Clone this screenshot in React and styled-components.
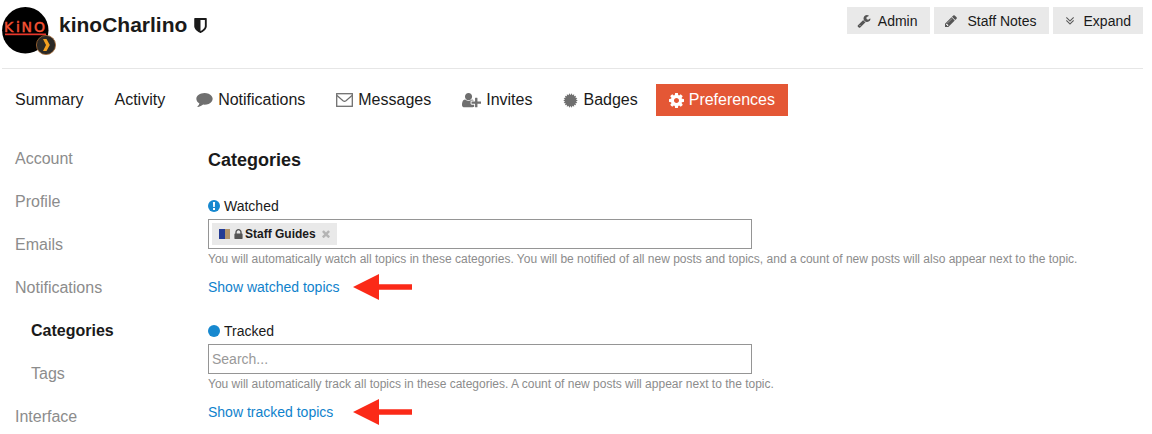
import React from "react";
import styled, { createGlobalStyle } from "styled-components";

const GlobalStyle = createGlobalStyle`
  *, *::before, *::after { box-sizing: border-box; }
  body {
    margin: 0;
    background: #fff;
    color: #1a1a1a;
    font-family: "Liberation Sans", Arial, Helvetica, sans-serif;
    font-size: 14px;
  }
  a { text-decoration: none; }
`;

const Page = styled.div`
  padding: 0 9px 0 2px;
`;

const Header = styled.header`
  display: flex;
  justify-content: space-between;
  align-items: flex-start;
  height: 69px;
  padding-top: 7px;
  border-bottom: 1px solid #e6e6e6;
`;

const Identity = styled.div`
  display: flex;
  gap: 2px;
`;

const Name = styled.h1`
  display: flex;
  align-items: center;
  gap: 7px;
  margin: 0;
  height: 36px;
  font-size: 21px;
  line-height: 36px;
`;

const Actions = styled.div`
  display: flex;
  gap: 4px;
`;

const ActionButton = styled.button`
  display: flex;
  align-items: center;
  gap: ${(p) => (p.$roomy ? 10 : 7)}px;
  height: 27px;
  padding: 0 12px 0 10px;
  border: 0;
  background: #e9e9e9;
  color: #1a1a1a;
  font: inherit;
  white-space: nowrap;
  cursor: pointer;
  svg { color: #555; }
`;

const Nav = styled.nav`
  display: flex;
  gap: 5px;
  margin-top: 15px;
`;

const NavLink = styled.a`
  display: flex;
  align-items: center;
  gap: 5px;
  height: 32px;
  padding: 0 13px;
  font-size: 16px;
  white-space: nowrap;
  color: ${(p) => (p.$active ? "#fff" : "#1a1a1a")};
  background: ${(p) => (p.$active ? "#e45735" : "transparent")};
  svg { color: ${(p) => (p.$active ? "#fff" : "#6f6f6f")}; }
`;

const Columns = styled.div`
  display: grid;
  grid-template-columns: 206px 1fr;
  margin-top: 21px;
`;

const Side = styled.nav`
  display: flex;
  flex-direction: column;
  padding-left: 13px;
`;

const SideLink = styled.a`
  height: 43px;
  line-height: 43px;
  padding-left: ${(p) => (p.$nested ? 16 : 0)}px;
  font-size: 16px;
  font-weight: ${(p) => (p.$current ? 700 : 400)};
  color: ${(p) => (p.$current ? "#1a1a1a" : "#8c8c8c")};
`;

const Main = styled.main`
  display: flex;
  flex-direction: column;
  padding-top: 11px;
`;

const Heading = styled.h2`
  margin: 0 0 25px;
  font-size: 18px;
  line-height: 24px;
`;

const Field = styled.section`
  height: 125px;
`;

const FieldLabel = styled.label`
  display: flex;
  align-items: center;
  gap: 4px;
  height: 18px;
  margin-bottom: 4px;
`;

const SelectBox = styled.div`
  display: flex;
  align-items: center;
  max-width: 544px;
  height: 30px;
  padding: 0 3px;
  border: 1px solid #959595;
`;

const SearchInput = styled.input`
  flex: 1;
  min-width: 0;
  padding: 0;
  border: 0;
  outline: 0;
  background: transparent;
  font: inherit;
  &::placeholder { color: #999; opacity: 1; }
`;

const Tag = styled.span`
  display: flex;
  align-items: center;
  height: 22px;
  padding: 0 7px;
  background: #e9e9e9;
  font-size: 12px;
  font-weight: 700;
  svg { color: #555; }
`;

const Swatch = styled.span`
  width: 11px;
  height: 10px;
  margin-right: 4px;
  background: linear-gradient(90deg, #253c94 50%, #b3956b 50%);
`;

const TagName = styled.span`
  margin: 0 6px 0 2px;
`;

const RemoveButton = styled.button`
  display: flex;
  padding: 0;
  border: 0;
  background: none;
  cursor: pointer;
  svg { color: #b4b4b4; }
`;

const Hint = styled.p`
  margin: 1px 0 0;
  font-size: 12px;
  line-height: 18px;
  color: #8c8c8c;
`;

const LinkRow = styled.div`
  display: flex;
  align-items: center;
  height: 38px;
`;

const TopicsLink = styled.a`
  width: 145px;
  color: #0f82cc;
`;

const FaIcon = ({ d, w = 16, h = 16, box = "0 0 1792 1792" }) => (
  <svg width={w} height={h} viewBox={box} fill="currentColor" aria-hidden="true">
    <path d={d} />
  </svg>
);

const paths = {
  wrench:
    "M448 1472q0-26-19-45t-45-19-45 19-19 45 19 45 45 19 45-19 19-45zm644-420l-682 682q-37 37-90 37-52 0-91-37l-106-108q-38-36-38-90 0-53 38-91l681-681q39 98 114.500 173.500t173.500 114.500zm634-435q0 39-23 106-47 134-164.500 217.500t-258.500 83.500q-185 0-316.500-131.500t-131.500-316.500 131.500-316.500 316.500-131.500q58 0 121.500 16.500t107.500 46.500q16 11 16 28t-16 28l-293 169v224l193 107q5-3 79-48.500t135.500-81 70.500-35.500q15 0 23.500 10t8.500 25z",
  pencil:
    "M491 1536l91-91-235-235-91 91v107h128v128h107zm523-928q0-22-22-22-10 0-17 7l-542 542q-7 7-7 17 0 22 22 22 10 0 17-7l542-542q7-7 7-17zm-54-192l416 416-832 832h-416v-416zm683 96q0 53-37 90l-166 166-416-416 166-165q36-38 90-38 53 0 91 38l235 234q37 39 37 91z",
  doubleDown:
    "M1395 864q0 13-10 23l-466 466q-10 10-23 10t-23-10l-466-466q-10-10-10-23t10-23l50-50q10-10 23-10t23 10l393 393 393-393q10-10 23-10t23 10l50 50q10 10 10 23zm0-384q0 13-10 23l-466 466q-10 10-23 10t-23-10l-466-466q-10-10-10-23t10-23l50-50q10-10 23-10t23 10l393 393 393-393q10-10 23-10t23 10l50 50q10 10 10 23z",
  comment:
    "M1792 896q0 174-120 321.500t-326 233-450 85.500q-70 0-145-8-198 175-460 242-49 14-114 22-17 2-30.500-9t-17.500-29v-1q-3-4-.5-12t2-10 4.500-9.500l6-9 7-8.500 8-9q7-8 31-34.500t34.500-38 31-39.500 32.500-51 27-59 26-76q-157-89-247.500-220t-90.500-281q0-130 71-248.500t191-204.500 286-136.500 348-50.500q244 0 450 85.500t326 233 120 321.500z",
  userPlus:
    "M704 896q-159 0-271.500-112.500t-112.500-271.500 112.500-271.500 271.500-112.500 271.500 112.500 112.500 271.500-112.500 271.500-271.500 112.500zm960 128h352q13 0 22.500 9.500t9.500 22.500v192q0 13-9.500 22.500t-22.500 9.500h-352v352q0 13-9.500 22.500t-22.500 9.500h-192q-13 0-22.500-9.500t-9.500-22.500v-352h-352q-13 0-22.500-9.500t-9.500-22.500v-192q0-13 9.500-22.500t22.500-9.500h352v-352q0-13 9.500-22.500t22.500-9.500h192q13 0 22.500 9.500t9.500 22.500v352zm-736 224q0 52 38 90t90 38h256v238q-68 50-171 50h-874q-121 0-194-69t-73-190q0-53 3.500-103.500t14-109 26.500-108.500 43-97.500 62-81 85.500-53.500 111.500-20q19 0 39 17 79 61 154.500 91.500t164.500 30.500 164.500-30.500 154.500-91.500q20-17 39-17 132 0 217 96h-223q-52 0-90 38t-38 90v192z",
  cog:
    "M1152 896q0-106-75-181t-181-75-181 75-75 181 75 181 181 75 181-75 75-181zm512-109v222q0 12-8 23t-20 13l-185 28q-19 54-39 91 35 50 107 138 10 12 10 25t-9 23q-27 37-99 108t-94 71q-12 0-26-9l-138-108q-44 23-91 38-16 136-29 186-7 28-36 28h-222q-14 0-24.500-8.500t-11.500-21.500l-28-184q-49-16-90-37l-141 107q-10 9-25 9-14 0-25-11-126-114-165-168-7-10-7-23 0-12 8-23 15-21 51-66.500t54-70.500q-27-50-41-99l-183-27q-13-2-21-12.500t-8-23.500v-222q0-12 8-23t19-13l186-28q14-46 39-92-40-57-107-138-10-12-10-24 0-10 9-23 26-36 98.500-107.500t94.500-71.500q13 0 26 10l138 107q44-23 91-38 16-136 29-186 7-28 36-28h222q14 0 24.500 8.500t11.500 21.500l28 184q49 16 90 37l142-107q9-9 24-9 13 0 25 10 129 119 165 170 7 8 7 22 0 12-8 23-15 21-51 66.500t-54 70.500q26 50 41 98l183 28q13 2 21 12.500t8 23.500z",
  shield:
    "M1344 960v-640h-448v1137q119-63 213-137 235-184 235-360zm192-768v768q0 86-33.5 170.500t-83 150-118 127.500-126.500 103-121 77.500-89.500 49.500-42.500 20q-12 6-26 6t-26-6q-16-7-42.500-20t-89.500-49.500-121-77.500-126.500-103-118-127.500-83-150-33.500-170.500v-768q0-26 19-45t45-19h1152q26 0 45 19t19 45z",
  lock:
    "M640 768h512v-192q0-106-75-181t-181-75-181 75-75 181v192zm832 96v576q0 40-28 68t-68 28h-960q-40 0-68-28t-28-68v-576q0-40 28-68t68-28h32v-192q0-184 132-316t316-132 316 132 132 316v192h32q40 0 68 28t28 68z",
  times:
    "M1490 1322q0 40-28 68l-136 136q-28 28-68 28t-68-28l-294-294-294 294q-28 28-68 28t-68-28l-136-136q-28-28-28-68t28-68l294-294-294-294q-28-28-28-68t28-68l136-136q28-28 68-28t68 28l294 294 294-294q28-28 68-28t68 28l136 136q28 28 28 68t-28 68l-294 294 294 294q28 28 28 68z",
};

const Envelope = () => (
  <svg width="17" height="14" viewBox="0 0 17 14" fill="none" stroke="currentColor" aria-hidden="true">
    <rect x="0.7" y="0.7" width="15.6" height="12.6" strokeWidth="1.3" />
    <path d="M1 2.5L7 7.8Q8.500 9 10 7.800L16 2.500" strokeWidth="1.2" />
  </svg>
);

const sealPoints = Array.from({ length: 36 }, (_, i) => {
  const r = i % 2 ? 5.6 : 7.3;
  const a = (Math.PI * i) / 18;
  return `${(7.5 + r * Math.cos(a)).toFixed(2)},${(7.5 + r * Math.sin(a)).toFixed(2)}`;
}).join(" ");

const Seal = () => (
  <svg width="15" height="15" viewBox="0 0 15 15" fill="currentColor" aria-hidden="true">
    <polygon points={sealPoints} />
  </svg>
);

const Avatar = () => (
  <svg width="55" height="49" viewBox="0 0 55 49" role="img" aria-label="kinoCharlino">
    <circle cx="23.300" cy="23.300" r="23.200" fill="#000" />
    <g fill="#f4603c" stroke="#f0402a" strokeWidth="0.5" fontFamily="DejaVu Sans, sans-serif" fontSize="14">
      <text x="2 14 19.500 32" y="25">KiNO</text>
    </g>
    <rect x="3" y="26.500" width="41" height="1.700" fill="#e8372c" />
    <circle cx="44" cy="38" r="9.600" fill="#2b2926" stroke="#a86b35" strokeWidth="0.8" />
    <path d="M41 32h3.500l3.300 6-3.300 6H41l3-6z" fill="#f3a01f" />
  </svg>
);

const Dot = ({ alert }) => (
  <svg width="12" height="12" viewBox="0 0 12 12" aria-hidden="true">
    <circle cx="6" cy="6" r="6" fill="#1788cf" />
    {alert && <path d="M4.900 2h2.200l-.3 5H5.200zM5 8h2v2H5z" fill="#fff" />}
  </svg>
);

const Arrow = () => (
  <svg width="59" height="26" viewBox="0 0 59 26" aria-hidden="true">
    <path d="M0 13L26 0v10.300h33v5.400H26V26z" fill="#fb2a18" />
  </svg>
);

const navItems = [
  { label: "Summary" },
  { label: "Activity" },
  { label: "Notifications", icon: <FaIcon d={paths.comment} w={17} h={14} box="0 256 1792 1536" /> },
  { label: "Messages", icon: <Envelope /> },
  { label: "Invites", icon: <FaIcon d={paths.userPlus} w={19} h={15} box="0 128 2048 1600" /> },
  { label: "Badges", icon: <Seal /> },
  { label: "Preferences", icon: <FaIcon d={paths.cog} w={15} h={15} box="128 128 1536 1536" />, active: true },
];

const sideItems = [
  { label: "Account" },
  { label: "Profile" },
  { label: "Emails" },
  { label: "Notifications" },
  { label: "Categories", nested: true, current: true },
  { label: "Tags", nested: true },
  { label: "Interface" },
];

export default function App() {
  return (
    <Page>
      <GlobalStyle />
      <Header>
        <Identity>
          <Avatar />
          <Name>
            kinoCharlino
            <FaIcon d={paths.shield} w={13} h={15} box="256 128 1280 1536" />
          </Name>
        </Identity>
        <Actions>
          <ActionButton type="button">
            <FaIcon d={paths.wrench} w={14} h={14} />
            Admin
          </ActionButton>
          <ActionButton type="button" $roomy>
            <FaIcon d={paths.pencil} w={14} h={14} />
            Staff Notes
          </ActionButton>
          <ActionButton type="button">
            <FaIcon d={paths.doubleDown} w={14} h={14} />
            Expand
          </ActionButton>
        </Actions>
      </Header>

      <Nav aria-label="User">
        {navItems.map((n) => (
          <NavLink key={n.label} href="#" $active={n.active}>
            {n.icon}
            {n.label}
          </NavLink>
        ))}
      </Nav>

      <Columns>
        <Side aria-label="Preferences">
          {sideItems.map((s) => (
            <SideLink key={s.label} href="#" $nested={s.nested} $current={s.current}>
              {s.label}
            </SideLink>
          ))}
        </Side>
        <Main>
          <Heading>Categories</Heading>
          <Field>
            <FieldLabel htmlFor="watched">
              <Dot alert />
              Watched
            </FieldLabel>
            <SelectBox>
              <Tag>
                <Swatch />
                <FaIcon d={paths.lock} w={9} h={10} box="320 128 1152 1408" />
                <TagName>Staff Guides</TagName>
                <RemoveButton type="button" aria-label="Remove Staff Guides">
                  <FaIcon d={paths.times} w={8} h={8} box="302 302 1188 1252" />
                </RemoveButton>
              </Tag>
              <SearchInput id="watched" type="text" />
            </SelectBox>
            <Hint>
              You will automatically watch all topics in these categories. You will be notified of all new posts and
              topics, and a count of new posts will also appear next to the topic.
            </Hint>
            <LinkRow>
              <TopicsLink href="#">Show watched topics</TopicsLink>
              <Arrow />
            </LinkRow>
          </Field>
          <Field>
            <FieldLabel htmlFor="tracked">
              <Dot />
              Tracked
            </FieldLabel>
            <SelectBox>
              <SearchInput id="tracked" type="text" placeholder="Search..." />
            </SelectBox>
            <Hint>
              You will automatically track all topics in these categories. A count of new posts will appear next to
              the topic.
            </Hint>
            <LinkRow>
              <TopicsLink href="#">Show tracked topics</TopicsLink>
              <Arrow />
            </LinkRow>
          </Field>
        </Main>
      </Columns>
    </Page>
  );
}
